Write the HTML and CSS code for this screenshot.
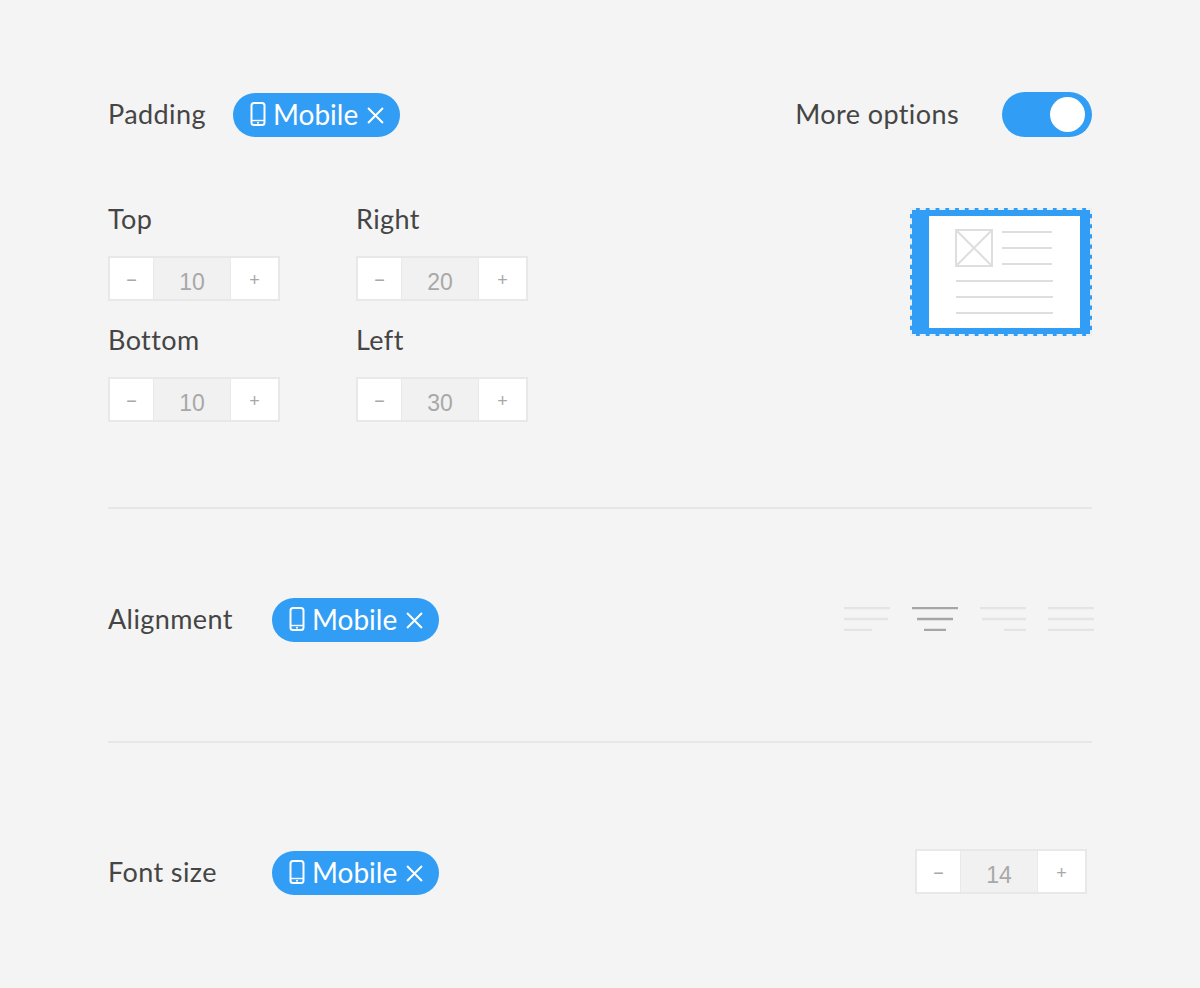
FILE: index.html
```html
<!DOCTYPE html>
<html lang="en">
<head>
  <meta charset="UTF-8">
  <title>Responsive Settings</title>
  <link rel="stylesheet" href="styles.css">
</head>
<body>
  <svg class="sprite" width="0" height="0">
    <symbol id="phone" viewBox="0 0 16 24">
      <rect x="1.5" y="1" width="13" height="22" rx="2.5" fill="none" stroke="currentColor" stroke-width="2"/>
      <path d="M2 18.5h12" stroke="currentColor" stroke-width="1.4"/>
      <circle cx="8" cy="20.8" r="1" fill="currentColor"/>
    </symbol>
    <symbol id="close" viewBox="0 0 16 16">
      <path d="M1 1l14 14M15 1L1 15" fill="none" stroke="currentColor" stroke-width="1.9"/>
    </symbol>
  </svg>

  <div class="container">
    <section class="section padding-section">
      <div class="row">
        <div class="row-left">
          <span class="label">Padding</span>
          <span class="chip">
            <svg class="chip-phone"><use href="#phone"/></svg>Mobile<svg class="chip-close"><use href="#close"/></svg>
          </span>
        </div>
        <div class="row-right">
          <span class="label">More options</span>
          <span class="toggle"><span class="knob"></span></span>
        </div>
      </div>

      <div class="padding-body">
        <div class="fields">
          <div class="field">
            <span class="label">Top</span>
            <div class="stepper"><span class="step">−</span><span class="value">10</span><span class="step">+</span></div>
          </div>
          <div class="field">
            <span class="label">Right</span>
            <div class="stepper"><span class="step">−</span><span class="value">20</span><span class="step">+</span></div>
          </div>
          <div class="field">
            <span class="label">Bottom</span>
            <div class="stepper"><span class="step">−</span><span class="value">10</span><span class="step">+</span></div>
          </div>
          <div class="field">
            <span class="label">Left</span>
            <div class="stepper"><span class="step">−</span><span class="value">30</span><span class="step">+</span></div>
          </div>
        </div>

        <div class="preview">
          <svg class="preview-card" viewBox="0 0 151 112">
            <g fill="none" stroke="#dedede" stroke-width="2">
              <path d="M27 14h36v36H27zM27 14l36 36M63 14L27 50"/>
              <path d="M73 16h50M73 32h50M73 48h50M27 65h97M27 81h97M27 97h97"/>
            </g>
          </svg>
        </div>
      </div>
    </section>

    <section class="section align-section">
      <div class="row">
        <div class="row-left">
          <span class="label label-wide">Alignment</span>
          <span class="chip">
            <svg class="chip-phone"><use href="#phone"/></svg>Mobile<svg class="chip-close"><use href="#close"/></svg>
          </span>
        </div>
        <div class="align-icons">
          <svg class="align-icon" viewBox="0 0 46 24"><path d="M0 1h46M0 12h44M0 23h28"/></svg>
          <svg class="align-icon active" viewBox="0 0 46 24"><path d="M0 1h46M5 12h36M12 23h22"/></svg>
          <svg class="align-icon" viewBox="0 0 46 24"><path d="M0 1h46M2 12h44M24 23h22"/></svg>
          <svg class="align-icon" viewBox="0 0 46 24"><path d="M0 1h46M0 12h46M0 23h46"/></svg>
        </div>
      </div>
    </section>

    <section class="section font-section">
      <div class="row">
        <div class="row-left">
          <span class="label label-wide">Font size</span>
          <span class="chip">
            <svg class="chip-phone"><use href="#phone"/></svg>Mobile<svg class="chip-close"><use href="#close"/></svg>
          </span>
        </div>
        <div class="stepper font-stepper"><span class="step">−</span><span class="value">14</span><span class="step">+</span></div>
      </div>
    </section>
  </div>
</body>
</html>
```

FILE: styles.css
```css
* {
  margin: 0;
  padding: 0;
  box-sizing: border-box;
}
body {
  background-color: #f4f4f4;
  color: #454545;
  font-family: 'Lato', sans-serif;
  height: 988px;
  overflow: hidden;
}
.sprite {
  display: block;
  height: 0;
}
.container {
  width: 984px;
  margin-left: 108px;
}
.section {
  border-bottom: 2px solid #e7e7e7;
}
.section:last-child {
  border-bottom: none;
}
.padding-section {
  height: 509px;
  padding-top: 92px;
}
.align-section {
  height: 234px;
  padding-top: 88px;
}
.font-section {
  padding-top: 107px;
}
.row {
  display: flex;
  justify-content: space-between;
  align-items: center;
  height: 45px;
}
.row-left,
.row-right {
  display: flex;
  align-items: center;
}
.label {
  font-size: 27px;
  letter-spacing: 0.4px;
  line-height: 32px;
  padding-bottom: 2px;
}
.row-left .label {
  width: 125px;
}
.row-left .label.label-wide {
  width: 164px;
}
.chip {
  display: flex;
  align-items: center;
  width: 167px;
  height: 44px;
  padding-left: 17px;
  padding-bottom: 1px;
  background-color: #319df4;
  border-radius: 22px;
  color: #fff;
  font-size: 28px;
}
.chip-phone {
  width: 16px;
  height: 24px;
  margin-right: 7px;
}
.chip-close {
  width: 17px;
  height: 17px;
  margin-left: 9px;
  margin-top: 3px;
}
.row-right .label {
  margin-right: 43px;
}
.toggle {
  display: flex;
  justify-content: flex-end;
  align-items: center;
  width: 90px;
  height: 45px;
  padding-right: 7px;
  background-color: #319df4;
  border-radius: 23px;
}
.knob {
  width: 35px;
  height: 35px;
  background-color: #fff;
  border-radius: 50%;
}
.padding-body {
  display: flex;
  justify-content: space-between;
  align-items: flex-start;
  margin-top: 71px;
}
.fields {
  display: grid;
  grid-template-columns: repeat(2, 248px);
  grid-auto-rows: 121px;
  margin-top: -8px;
}
.field {
  display: flex;
  flex-direction: column;
}
.field .label {
  margin-top: 3px;
  height: 34px;
}
.stepper {
  display: flex;
  width: 172px;
  height: 45px;
  margin-top: 19px;
  border: 2px solid #e8e8e8;
  background-color: #fff;
  color: #a8a8a8;
  font-family: 'Liberation Sans', Arial, sans-serif;
}
.step {
  display: flex;
  justify-content: center;
  align-items: center;
  width: 43px;
  padding-top: 4px;
  font-size: 18px;
}
.step:last-child {
  width: 47px;
}
.value {
  display: flex;
  justify-content: center;
  align-items: center;
  flex: 1;
  padding-top: 8px;
  background-color: #f1f1f1;
  border-left: 1px solid #e9e9e9;
  border-right: 1px solid #e9e9e9;
  font-size: 23px;
}
.preview {
  display: flex;
  align-items: center;
  justify-content: flex-end;
  width: 182px;
  height: 128px;
  padding-right: 10px;
  background-color: #319df4;
  border: 2px dashed #e9eef3;
}
.preview-card {
  display: block;
  width: 151px;
  height: 112px;
  background-color: #fff;
}
.align-icons {
  display: flex;
  gap: 22px;
  margin-right: -2px;
  margin-top: -1px;
}
.align-icon {
  width: 46px;
  height: 24px;
  fill: none;
  stroke: #e4e4e4;
  stroke-width: 2.4;
}
.align-icon.active {
  stroke: #a6a6a6;
}
.font-stepper {
  margin-top: -1px;
  margin-bottom: 1px;
  margin-right: 5px;
}
```
